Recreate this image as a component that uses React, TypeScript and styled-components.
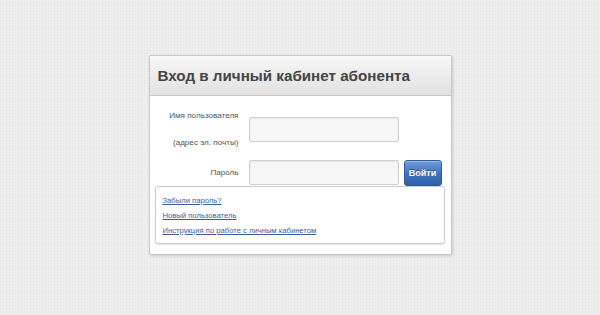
import styled, { createGlobalStyle } from "styled-components";

const GlobalStyle = createGlobalStyle`
    html, body {
        margin: 0;
        padding: 0;
    }
    body {
        min-height: 315px;
        font-family: "Liberation Sans", Arial, sans-serif;
        background-color: #efefef;
        background-image:
            repeating-linear-gradient(0deg, rgba(0, 0, 0, 0.016) 0 1px, transparent 1px 3px),
            repeating-linear-gradient(90deg, rgba(0, 0, 0, 0.016) 0 1px, transparent 1px 3px);
    }
`;

const Page = styled.div`
    display: flex;
    justify-content: center;
    padding-top: 55px;
`;

const Panel = styled.div`
    box-sizing: border-box;
    width: 303px;
    background: #ffffff;
    border: 1px solid #c8c8c8;
    border-radius: 2px;
    box-shadow: 1px 1px 3px rgba(0, 0, 0, 0.15);
    padding-bottom: 10px;
`;

const Header = styled.div`
    height: 39px;
    display: flex;
    align-items: center;
    padding: 0 8px;
    background: linear-gradient(to bottom, #f7f7f7 0%, #e2e2e2 100%);
    border-bottom: 1px solid #c9c9c9;
`;

const Title = styled.h1`
    margin: 0;
    font-size: 15.2px;
    font-weight: bold;
    color: #444444;
`;

const Form = styled.div`
    display: grid;
    grid-template-columns: 89px 150px 38px;
    column-gap: 10px;
    row-gap: 3px;
    padding: 6px 0 0 0;
    align-items: center;
`;

const Label = styled.div`
    font-size: 8.1px;
    color: #555555;
    text-align: right;
    line-height: 27px;
    white-space: nowrap;
`;

const Input = styled.input`
    box-sizing: border-box;
    width: 150px;
    height: 25px;
    background: #f7f7f7;
    border: 1px solid #cfcfcf;
    border-radius: 2px;
    box-shadow: inset 0 1px 2px rgba(0, 0, 0, 0.06);
    outline: none;
`;

const Button = styled.button`
    box-sizing: border-box;
    width: 38px;
    height: 26px;
    margin-left: -5px;
    padding: 0;
    border: 1px solid #2d5a9c;
    border-radius: 3px;
    background: linear-gradient(to bottom, #6f9bd8 0%, #3f72bd 55%, #2f60aa 100%);
    color: #ffffff;
    font-family: "Liberation Sans", Arial, sans-serif;
    font-size: 9px;
    font-weight: bold;
    text-shadow: 0 -1px 0 rgba(0, 0, 0, 0.35);
    box-shadow: inset 0 1px 0 rgba(255, 255, 255, 0.3);
`;

const Links = styled.div`
    display: flex;
    flex-direction: column;
    margin: 0 6px 0 5px;
    padding: 6px 7px 5px;
    border: 1px solid #cccccc;
    border-radius: 3px;
    box-shadow: 0 1px 2px rgba(0, 0, 0, 0.12);
`;

const Link = styled.a`
    font-size: 7.65px;
    line-height: 15px;
    color: #3d5f9e;
    text-decoration: underline;
    white-space: nowrap;
`;

export default function App() {
    return (
        <>
            <GlobalStyle />
            <Page>
                <Panel>
                    <Header>
                        <Title>Вход в личный кабинет абонента</Title>
                    </Header>
                    <Form>
                        <Label>
                            Имя пользователя
                            <br />
                            (адрес эл. почты)
                        </Label>
                        <Input type="text" />
                        <span />
                        <Label>Пароль</Label>
                        <Input type="password" />
                        <Button type="button">Войти</Button>
                    </Form>
                    <Links>
                        <Link href="#">Забыли пароль?</Link>
                        <Link href="#">Новый пользователь</Link>
                        <Link href="#">Инструкция по работе с личным кабинетом</Link>
                    </Links>
                </Panel>
            </Page>
        </>
    );
}
